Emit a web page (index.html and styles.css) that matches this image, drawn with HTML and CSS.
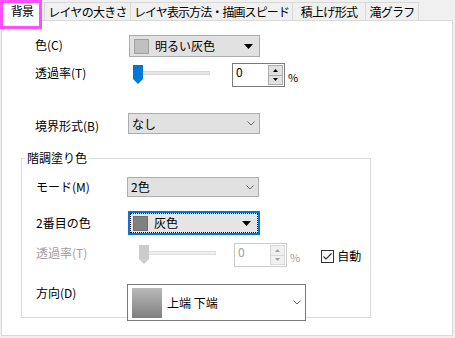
FILE: index.html
```html
<!DOCTYPE html>
<html lang="ja">
<head>
    <meta charset="UTF-8">
    <title>背景</title>
    <link rel="stylesheet" href="styles.css">
</head>
<body>
<div class="tabs">
    <div class="tab tab-active">背景</div>
    <div class="tab">レイヤの大きさ</div>
    <div class="tab">レイヤ表示方法・描画スピード</div>
    <div class="tab">積上げ形式</div>
    <div class="tab">滝グラフ</div>
    <div class="highlight"></div>
</div>

<div class="panel">
    <div class="row row-color">
        <span class="label">色(C)</span>
        <div class="combo combo-list">
            <span class="swatch swatch-light"></span>
            <span class="combo-text">明るい灰色</span>
            <svg class="tri" width="9" height="5" viewBox="0 0 9 5"><polygon points="0,0 9,0 4.5,5" fill="#000"/></svg>
        </div>
    </div>

    <div class="row row-alpha">
        <span class="label">透過率(T)</span>
        <div class="slider">
            <svg class="thumb" width="10" height="19" viewBox="0 0 10 19"><path d="M0 0 H10 V14 L5 19 L0 14 Z" fill="#0078d7"/></svg>
            <div class="track"></div>
        </div>
        <div class="spin">
            <span class="spin-value">0</span>
            <div class="spin-buttons">
                <div class="spin-btn"><svg width="5" height="3" viewBox="0 0 5 3"><polygon points="2.5,0 5,3 0,3" fill="#000"/></svg></div>
                <div class="spin-btn"><svg width="5" height="3" viewBox="0 0 5 3"><polygon points="0,0 5,0 2.5,3" fill="#000"/></svg></div>
            </div>
        </div>
        <span class="unit">%</span>
    </div>

    <div class="row row-border">
        <span class="label">境界形式(B)</span>
        <div class="combo combo-plain">
            <span class="combo-text">なし</span>
            <svg class="chevron" width="8" height="5" viewBox="0 0 8 5"><polyline points="0.5,0.5 4,4 7.5,0.5" fill="none" stroke="#666" stroke-width="1"/></svg>
        </div>
    </div>

    <div class="group">
        <span class="group-title">階調塗り色</span>

        <div class="row row-mode">
            <span class="label">モード(M)</span>
            <div class="combo combo-plain combo-mode">
                <span class="combo-text">2色</span>
                <svg class="chevron" width="8" height="5" viewBox="0 0 8 5"><polyline points="0.5,0.5 4,4 7.5,0.5" fill="none" stroke="#666" stroke-width="1"/></svg>
            </div>
        </div>

        <div class="row row-second">
            <span class="label">2番目の色</span>
            <div class="combo combo-focus">
                <div class="focus-ring">
                    <span class="swatch swatch-gray"></span>
                    <span class="combo-text">灰色</span>
                    <svg class="tri" width="9" height="5" viewBox="0 0 9 5"><polygon points="0,0 9,0 4.5,5" fill="#000"/></svg>
                </div>
            </div>
        </div>

        <div class="row row-alpha2 disabled">
            <span class="label">透過率(T)</span>
            <div class="slider">
                <svg class="thumb" width="10" height="19" viewBox="0 0 10 19"><path d="M0 0 H10 V14 L5 19 L0 14 Z" fill="#cccccc"/></svg>
                <div class="track"></div>
            </div>
            <div class="spin">
                <span class="spin-value">0</span>
                <div class="spin-buttons">
                    <div class="spin-btn"><svg width="5" height="3" viewBox="0 0 5 3"><polygon points="2.5,0 5,3 0,3" fill="#a0a0a0"/></svg></div>
                    <div class="spin-btn"><svg width="5" height="3" viewBox="0 0 5 3"><polygon points="0,0 5,0 2.5,3" fill="#a0a0a0"/></svg></div>
                </div>
            </div>
            <span class="unit">%</span>
            <label class="check">
                <svg width="13" height="13" viewBox="0 0 13 13"><rect x="0.5" y="0.5" width="12" height="12" fill="#fff" stroke="#333"/><polyline points="2.5,6.5 5,9 10.5,3.5" fill="none" stroke="#333" stroke-width="1.2"/></svg>
                <span class="check-text">自動</span>
            </label>
        </div>

        <div class="row row-dir">
            <span class="label">方向(D)</span>
            <div class="combo combo-dir">
                <span class="grad"></span>
                <span class="combo-text">上端 下端</span>
                <svg class="chevron" width="8" height="5" viewBox="0 0 8 5"><polyline points="0.5,0.5 4,4 7.5,0.5" fill="none" stroke="#666" stroke-width="1"/></svg>
            </div>
        </div>
    </div>
</div>
</body>
</html>
```

FILE: styles.css
```css
* {
    margin: 0;
    padding: 0;
    box-sizing: border-box;
}

body {
    width: 455px;
    height: 338px;
    overflow: hidden;
    background-color: #f0f0f0;
    color: #000;
    font-family: "Noto Sans CJK JP", sans-serif;
    font-size: 12px;
    position: relative;
}

.tabs {
    display: flex;
    align-items: flex-end;
    height: 20px;
    padding-left: 2px;
    position: relative;
}

.tab {
    height: 18px;
    border: 1px solid #d9d9d9;
    border-bottom: none;
    background-color: #f0f0f0;
    line-height: 17px;
    text-align: center;
    white-space: nowrap;
    overflow: hidden;
    margin-left: -1px;
    letter-spacing: -0.7px;
}

.tab:nth-child(2) { width: 87px; margin-left: 2px; }
.tab:nth-child(3) { width: 163px; letter-spacing: -0.9px; }
.tab:nth-child(4) { width: 74px; }
.tab:nth-child(5) { width: 54px; }

.tab-active {
    width: 40px;
    height: 21px;
    margin-left: 0;
    margin-bottom: -1px;
    background-color: #fff;
    line-height: 19px;
    position: relative;
    z-index: 2;
}

.highlight {
    position: absolute;
    left: 0;
    top: 0;
    width: 42px;
    height: 29px;
    border: 3px solid #ff4dff;
    z-index: 3;
}

.panel {
    margin-left: 1px;
    width: 452px;
    height: 316px;
    border: 1px solid #d9d9d9;
    background-color: #fff;
}

.row {
    display: flex;
    align-items: flex-start;
    padding-left: 33px;
}

.label {
    width: 93px;
    flex-shrink: 0;
    line-height: 14px;
    padding-top: 3px;
    white-space: nowrap;
}

.row-color { margin-top: 14px; }
.row-alpha { margin-top: 6px; }
.row-border { margin-top: 26px; }
.row-border .label { padding-top: 6px; }

.combo {
    display: flex;
    align-items: center;
    width: 131px;
    border: 1px solid #adadad;
    background-color: #e1e1e1;
}

.combo-list {
    height: 22px;
    margin-left: 1px;
    padding-left: 4px;
}

.combo-plain {
    height: 21px;
    width: 132px;
    padding-left: 3px;
}

.combo-text {
    flex: 1;
    line-height: 14px;
    white-space: nowrap;
}

.swatch {
    width: 15px;
    height: 15px;
    border: 1px solid #a0a0a0;
    margin-right: 6px;
    flex-shrink: 0;
}

.swatch-light { background-color: #c0c0c0; }
.swatch-gray { background-color: #808080; border-color: #707070; }

.tri { margin-right: 6px; flex-shrink: 0; }
.chevron { margin-right: 4px; flex-shrink: 0; }

.slider {
    display: flex;
    align-items: flex-start;
    width: 104px;
    padding-left: 5px;
    padding-top: 2px;
    flex-shrink: 0;
}

.thumb { flex-shrink: 0; }

.track {
    width: 67px;
    height: 4px;
    margin-top: 6px;
    background-color: #e7e7e7;
    border: 1px solid #d6d6d6;
    border-left: none;
}

.spin {
    display: flex;
    width: 53px;
    height: 24px;
    border: 1px solid #7a7a7a;
    background-color: #fff;
    flex-shrink: 0;
}

.spin-value {
    flex: 1;
    padding-left: 3px;
    padding-top: 1px;
    line-height: 14px;
}

.spin-buttons {
    display: flex;
    flex-direction: column;
    width: 16px;
    padding: 1px 1px 1px 0;
}

.spin-btn {
    flex: 1;
    display: flex;
    align-items: center;
    justify-content: center;
    background-color: #e1e1e1;
    border: 1px solid #adadad;
}

.spin-btn + .spin-btn { border-top: none; }

.unit {
    align-self: flex-end;
    margin-left: 3px;
    margin-bottom: 3px;
    line-height: 14px;
    font-size: 11px;
}

.group {
    margin-top: 24px;
    margin-left: 19px;
    width: 350px;
    height: 160px;
    border: 1px solid #dcdcdc;
}

.group-title {
    display: block;
    width: fit-content;
    height: 14px;
    line-height: 14px;
    margin-top: -8px;
    margin-left: 3px;
    padding: 0 2px;
    background-color: #fff;
}

.group .row { padding-left: 14px; }
.group .label { width: 91px; }

.row-mode { margin-top: 12px; }
.combo-mode { height: 20px; }

.row-second { margin-top: 14px; }
.row-second .label { padding-top: 5px; }

.combo-focus {
    height: 24px;
    width: 132px;
    margin-left: 1px;
    border: 2px solid #0078d7;
    background-color: #e5e5e5;
}

.focus-ring {
    display: flex;
    align-items: center;
    width: 100%;
    height: 100%;
    border: 1px dotted #000;
    padding-left: 2px;
}

.row-alpha2 { margin-top: 8px; }
.row-alpha2 .slider { margin-left: 7px; width: 100px; }

.disabled .label,
.disabled .spin-value,
.disabled .unit { color: #a0a0a0; }

.disabled .track {
    background-color: #eeeeee;
    border-color: #e0e0e0;
}

.disabled .spin { border-color: #cccccc; }

.disabled .spin-btn {
    background-color: #f0f0f0;
    border-color: #d9d9d9;
}

.check {
    display: flex;
    align-items: center;
    margin-left: 21px;
    margin-top: 6px;
}

.check-text {
    margin-left: 3px;
    line-height: 14px;
}

.row-dir { margin-top: 17px; }
.row-dir .label { padding-top: 2px; }

.combo-dir {
    width: 179px;
    height: 37px;
    border-color: #7a7a7a;
    background-color: #fff;
    padding-left: 4px;
}

.grad {
    width: 30px;
    height: 30px;
    margin-right: 5px;
    background: linear-gradient(#bababa, #7f7f7f);
    flex-shrink: 0;
}
```
